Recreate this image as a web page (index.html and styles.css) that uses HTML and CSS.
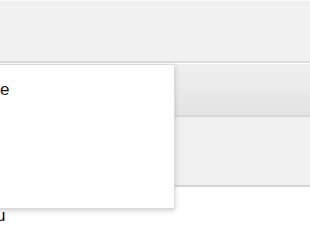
FILE: index.html
```html
<!DOCTYPE html>
<html lang="en">
<head>
    <meta charset="UTF-8">
    <meta name="viewport" content="width=device-width, initial-scale=1.0">
    <title>Menu</title>
    <link rel="stylesheet" href="styles.css">
</head>
<body>
    <div class="topbar"></div>

    <div class="main">
        <div class="table">
            <div class="table-head"></div>
            <div class="table-row"></div>
        </div>

        <div class="dropdown">
            <ul>
                <li><a href="#">Manage</a></li>
                <li><a href="#"></a></li>
            </ul>
        </div>

        <p class="note">Menu</p>
    </div>
</body>
</html>
```

FILE: styles.css
```css
body {
    font-family: "Liberation Sans", Arial, sans-serif;
    background-color: #ffffff;
    margin: 0;
    overflow: hidden;
}
.topbar {
    height: 60px;
    background: #f1f1f1;
    border-top: 1px solid #fbfbfb;
    border-bottom: 2px solid #dcdcdc;
}
.main {
    position: relative;
    padding-top: 1px;
}
.table-head {
    height: 51px;
    background: linear-gradient(#f0f0f0, #e3e3e3);
    border-bottom: 2px solid #d6d6d6;
}
.table-row {
    height: 68px;
    background: #f0f0f0;
    border-bottom: 2px solid #d4d4d4;
}
.dropdown {
    position: absolute;
    top: 1px;
    left: -60px;
    width: 233px;
    height: 143px;
    background: white;
    border: 1px solid #dadada;
    box-shadow: 0 2px 5px rgba(0,0,0,0.18);
}
.dropdown ul {
    list-style: none;
    margin: 0;
    padding: 15px 0 0 7px;
}
.dropdown ul li a {
    display: block;
    height: 24px;
    color: #111;
    text-decoration: none;
    font-size: 17px;
}
.note {
    margin: 19px 0 0 -37px;
    font-size: 17px;
    color: #111;
}
```
